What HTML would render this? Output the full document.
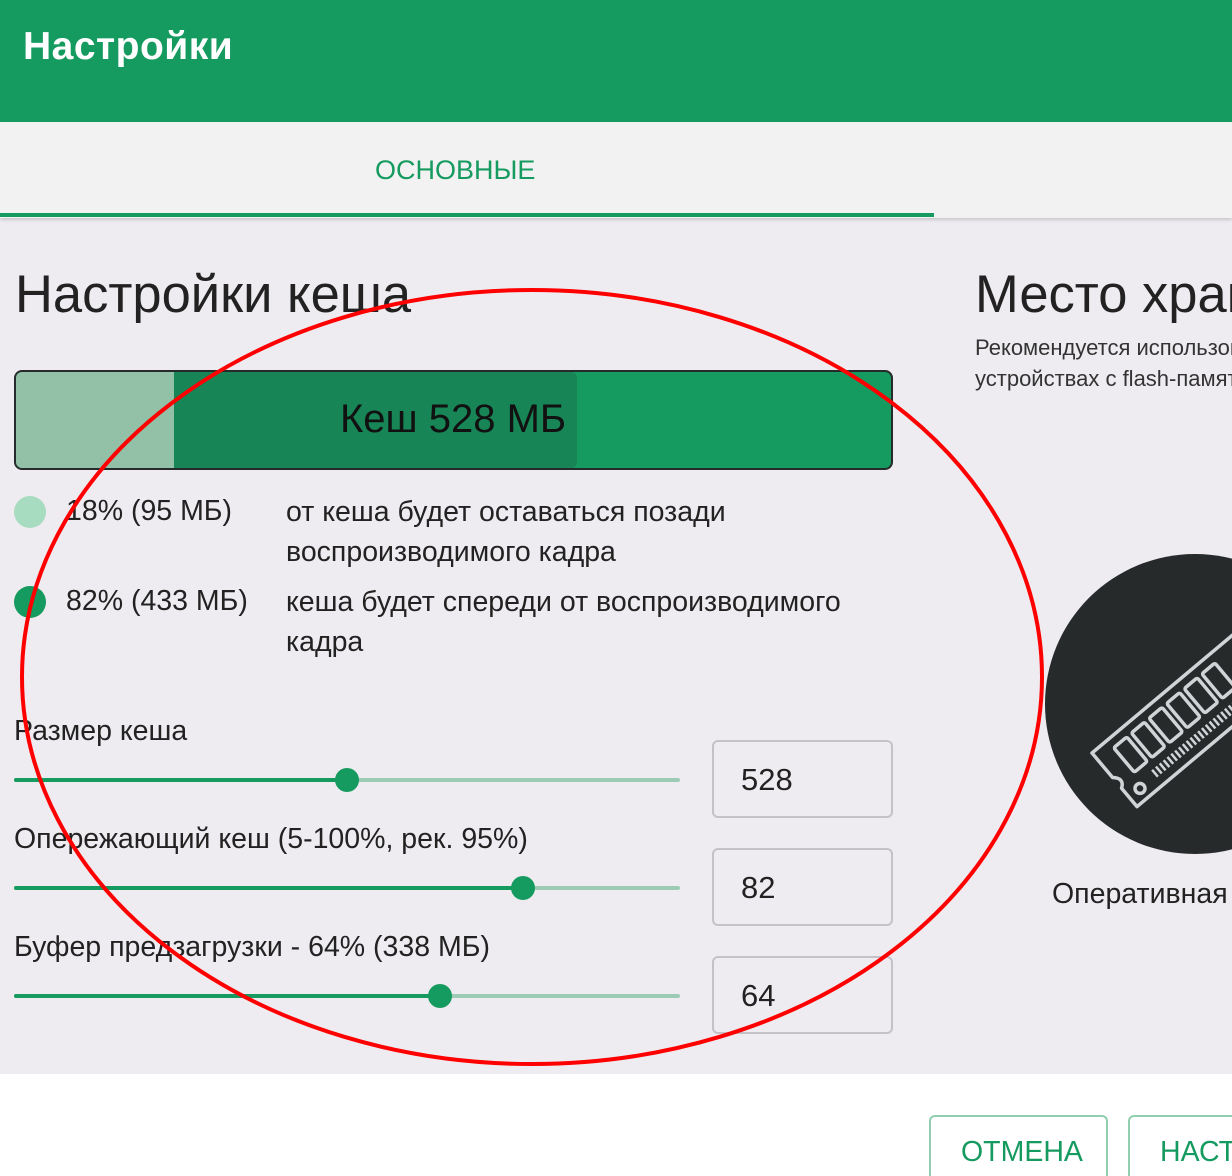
<!DOCTYPE html>
<html><head><meta charset="utf-8"><style>
*{margin:0;padding:0;box-sizing:border-box}
html,body{width:1232px;height:1176px;overflow:hidden}
body{background:#eeecf0;font-family:"Liberation Sans","DejaVu Sans",sans-serif;position:relative;color:#222}
.a{position:absolute;white-space:nowrap}
.track{position:absolute;left:14px;width:666px;height:4px;background:#9ccbb6;border-radius:2px}
.fill{position:absolute;left:0;top:0;height:4px;background:#159a5f;border-radius:2px}
.knob{position:absolute;top:-10px;width:24px;height:24px;border-radius:50%;background:#159a5f;margin-left:-12px}
.box{position:absolute;left:712px;width:181px;height:78px;border:2px solid #c4c2c6;border-radius:6px;font-size:31px;padding:20px 0 0 27px}
.lbl{font-size:28.5px}
.lg{font-size:28.5px}
</style></head><body>
<div class="a" style="left:0;top:0;width:1232px;height:122px;background:#159a5f"></div>
<div class="a" style="left:23px;top:25px;font-size:39px;font-weight:bold;color:#fff;letter-spacing:0.5px">Настройки</div>
<div class="a" style="left:0;top:122px;width:1232px;height:96px;background:#f2f2f2;box-shadow:0 2px 3px rgba(0,0,0,.15)"></div>
<div class="a" style="left:375px;top:155px;font-size:27px;color:#159a5f">ОСНОВНЫЕ</div>
<div class="a" style="left:0;top:213px;width:934px;height:4px;background:#159a5f"></div>

<div class="a" style="left:15px;top:264px;font-size:52.5px;color:#222">Настройки кеша</div>
<div class="a" style="left:975px;top:264px;font-size:52.5px;color:#222">Место хранения</div>
<div class="a" style="left:975px;top:332px;font-size:22px;line-height:31px;color:#333">Рекомендуется использовать<br>устройствах с flash-памятью</div>

<div class="a" style="left:14px;top:370px;width:879px;height:100px;border:2px solid #262a2b;border-radius:8px;overflow:hidden;background:#159a5f">
 <div class="a" style="left:0;top:0;width:158px;height:100%;background:#93c1a8"></div>
 <div class="a" style="left:158px;top:0;width:403px;height:100%;background:#178556;border-radius:0 6px 6px 0"></div>
 <div class="a" style="left:324px;top:25px;font-size:40px;color:#111">Кеш 528 МБ</div>
</div>

<div class="a" style="left:14px;top:496px;width:32px;height:32px;border-radius:50%;background:#a8dcc0"></div>
<div class="a lg" style="left:66px;top:495px">18% (95 МБ)</div>
<div class="a lg" style="left:286px;top:492px;line-height:40px">от кеша будет оставаться позади<br>воспроизводимого кадра</div>
<div class="a" style="left:14px;top:586px;width:32px;height:32px;border-radius:50%;background:#159a5f"></div>
<div class="a lg" style="left:66px;top:585px">82% (433 МБ)</div>
<div class="a lg" style="left:286px;top:582px;line-height:40px">кеша будет спереди от воспроизводимого<br>кадра</div>

<div class="a lbl" style="left:14px;top:715px">Размер кеша</div>
<div class="track" style="top:778px"><div class="fill" style="width:333px"></div><div class="knob" style="left:333px"></div></div>
<div class="box" style="top:740px">528</div>
<div class="a lbl" style="left:14px;top:823px">Опережающий кеш (5-100%, рек. 95%)</div>
<div class="track" style="top:886px"><div class="fill" style="width:509px"></div><div class="knob" style="left:509px"></div></div>
<div class="box" style="top:848px">82</div>
<div class="a lbl" style="left:14px;top:931px">Буфер предзагрузки - 64% (338 МБ)</div>
<div class="track" style="top:994px"><div class="fill" style="width:426px"></div><div class="knob" style="left:426px"></div></div>
<div class="box" style="top:956px">64</div>

<div class="a" style="left:1045px;top:554px;width:300px;height:300px;border-radius:50%;background:#262a2b;overflow:hidden">
<svg width="300" height="300" viewBox="0 0 300 300" style="position:absolute;left:0;top:0">
 <g transform="translate(47,199) rotate(-40)" fill="none" stroke="#d0d4d6" stroke-width="3.5" stroke-linejoin="round">
  <path d="M0 0 L260 0 L260 70 L0 70 L0 46 Q9 40 0 32 Z"/>
  <rect x="20" y="10" width="17" height="32" rx="2"/>
  <rect x="43" y="10" width="17" height="32" rx="2"/>
  <rect x="66" y="10" width="17" height="32" rx="2"/>
  <rect x="89" y="10" width="17" height="32" rx="2"/>
  <rect x="112" y="10" width="17" height="32" rx="2"/>
  <rect x="135" y="10" width="17" height="32" rx="2"/>
  <circle cx="14" cy="58" r="5"/>
  <path d="M34 56 H250" stroke-dasharray="2.5 2.5" stroke-width="9"/>
 </g>
</svg></div>
<div class="a" style="left:1052px;top:878px;font-size:28.5px">Оперативная память</div>

<div class="a" style="left:0;top:1074px;width:1232px;height:102px;background:#fff"></div>
<div class="a" style="left:929px;top:1115px;width:179px;height:80px;border:2px solid #8fcfb0;border-radius:6px"></div>
<div class="a" style="left:961px;top:1136px;font-size:28.5px;color:#159a5f">ОТМЕНА</div>
<div class="a" style="left:1128px;top:1115px;width:140px;height:80px;border:2px solid #8fcfb0;border-radius:6px"></div>
<div class="a" style="left:1160px;top:1136px;font-size:28.5px;color:#159a5f">НАСТРОИТЬ</div>

<svg class="a" style="left:0;top:0" width="1232" height="1176"><ellipse cx="532" cy="677" rx="510" ry="387" fill="none" stroke="#f00" stroke-width="4"/></svg>
</body></html>
